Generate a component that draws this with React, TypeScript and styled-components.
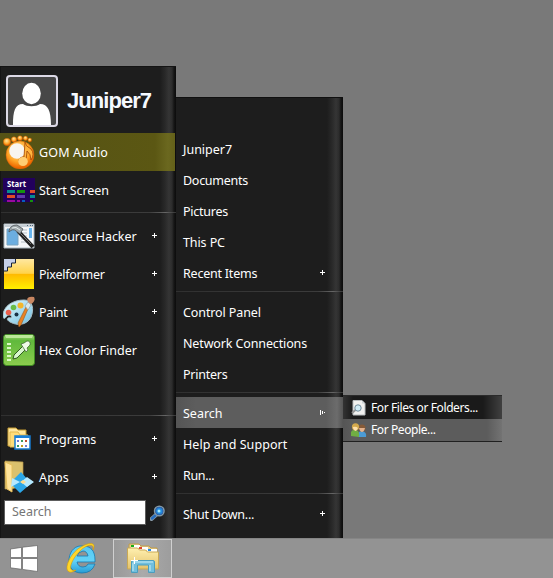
import React from 'react';
import styled, { createGlobalStyle } from 'styled-components';

const Global = createGlobalStyle`
  * { box-sizing: border-box; }
  body { margin: 0; font-family: "Noto Sans", "Open Sans", sans-serif; overflow: hidden; }
  svg { display: block; flex: none; }
`;

const Desktop = styled.div`
  width: 553px;
  height: 578px;
  display: flex;
  flex-direction: column;
  background: #797979;
  color: #fff;
`;

const Workspace = styled.main`
  height: 538px;
  display: flex;
  align-items: flex-end;
`;

const panelShade = `linear-gradient(to left, #0b0b0b 0, #151515 2px, #2c2c2c 4px, #353535 7px, #292929 11px, #1d1d1d 16px)`;

const LeftPanel = styled.section`
  width: 176px;
  height: 472px;
  background: ${panelShade};
  border-top: 1px solid #141414;
  border-left: 1px solid #141414;
`;

const RightPanel = styled.section`
  width: 167px;
  height: 441px;
  padding-top: 35px;
  background: ${panelShade};
  border-top: 1px solid #101010;
`;

const Profile = styled.header`
  height: 66px;
  display: flex;
  align-items: flex-start;
  padding: 8px 0 0 5px;
`;

const UserName = styled.h1`
  margin: 11px 0 0 9px;
  font: bold 22px/29px "Liberation Sans", Arial, sans-serif;
  letter-spacing: -0.95px;
  color: #f5f9ff;
`;

const AppRow = styled.div<{ $active?: boolean }>`
  height: 38px;
  margin-left: -1px;
  width: 175px;
  display: flex;
  align-items: center;
  padding-left: 3px;
  background: ${(p) => (p.$active ? 'linear-gradient(to right, #555215 0, #5b5713 155px, #6b681f 168px, #636019 100%)' : 'transparent')};
`;

const Label = styled.span<{ $spacing?: number }>`
  font-size: 12.5px;
  line-height: 18px;
  padding-top: 2px;
  letter-spacing: ${(p) => p.$spacing ?? 0}px;
  white-space: nowrap;
`;

const AppLabel = styled(Label)`
  width: 113px;
  margin-left: 4px;
`;

const Rule = styled.div`
  height: 8px;
  padding-top: 3px;
  &::before {
    content: '';
    display: block;
    height: 1px;
    background: linear-gradient(to right, #303030 0, #3c3c3c 85%, #666 94%, #333 100%);
  }
`;

const Spacer = styled.div`
  height: 43px;
`;

const SearchBar = styled.div`
  display: flex;
  align-items: center;
  gap: 4px;
  padding: 4px 0 0 3px;
`;

const SearchField = styled.input`
  width: 142px;
  height: 25px;
  padding: 0 7px 2px;
  border: 1px solid #5d5d5d;
  outline: 0;
  border-radius: 0;
  background: #fff;
  font: 12.5px "Noto Sans", sans-serif;
  &::placeholder { color: #757575; opacity: 1; }
`;

const PlaceRow = styled.div<{ $active?: boolean }>`
  height: 31px;
  display: flex;
  align-items: center;
  padding: 0 18px 0 7px;
  background: ${(p) => (p.$active ? 'linear-gradient(to right, #555 0, #5d5d5d 20px, #5d5d5d 150px, #6c6c6c 161px, #555 100%)' : 'transparent')};
`;

const PlaceLabel = styled(Label)`
  flex: 1;
  padding-top: 3px;
`;

const Flyout = styled.section`
  align-self: flex-start;
  width: 159px;
  height: 47px;
  margin-top: 395px;
  border-top: 1px solid #2b2b2b;
  border-bottom: 1px solid #202020;
`;

const FlyoutRow = styled.div<{ $active?: boolean }>`
  height: ${(p) => (p.$active ? 22 : 23)}px;
  display: flex;
  align-items: center;
  gap: 4px;
  padding: ${(p) => (p.$active ? 0 : 1)}px 0 0 8px;
  background: ${(p) =>
    p.$active
      ? 'linear-gradient(to right, #555, #5c5c5c 10px, #5c5c5c 144px, #737373 100%)'
      : 'linear-gradient(to right, #333, #1a1a1a 10px, #1a1a1a 140px, #404040 100%)'};
`;

const FlyoutLabel = styled.span`
  font-size: 12px;
  line-height: 18px;
  letter-spacing: -0.4px;
  white-space: nowrap;
`;

const Taskbar = styled.footer`
  height: 40px;
  display: flex;
  align-items: center;
  padding-left: 7px;
  background: #939393;
  border-top: 1px solid #858585;
`;

const TaskButton = styled.div<{ $open?: boolean; $gap?: number }>`
  width: ${(p) => (p.$open ? 59 : 34)}px;
  height: 39px;
  display: flex;
  align-items: center;
  justify-content: center;
  border: ${(p) => (p.$open ? '1px solid #d0d0d0' : '0')};
  background: ${(p) => (p.$open ? 'linear-gradient(to right, #999, #aaa 50%, #9d9d9d)' : 'transparent')};
  margin-right: ${(p) => p.$gap ?? 0}px;
`;

const Plus = () => (
  <svg width="5" height="6" viewBox="0 0 5 6" shapeRendering="crispEdges">
    <path d="M0 2h5v1H0zM2 0h1v5H2z" fill="#fff" />
  </svg>
);

const OpenMark = () => (
  <svg width="5" height="5" viewBox="0 0 5 5" shapeRendering="crispEdges">
    <path d="M0 0h1v5H0zM2 1h1v3H2zM4 2h1v1H4z" fill="#fff" />
  </svg>
);

const Avatar = () => (
  <svg width="52" height="52" viewBox="0 0 52 52">
    <rect x="1" y="1" width="50" height="50" rx="3" fill="#474747" stroke="#dcd9e6" strokeWidth="2" />
    <ellipse cx="25.5" cy="18.5" rx="9.3" ry="10.7" fill="#fff" />
    <path d="M7 50C7 36 9 29 17 29C21 32 30 32 34 29C42 29 45 36 45 50Z" fill="#fff" />
  </svg>
);

const GomIcon = () => (
  <svg width="32" height="34" viewBox="0 0 32 34">
    <defs>
      <radialGradient id="gom" cx=".45" cy=".35" r=".6"><stop offset="0" stopColor="#ffe49c" /><stop offset=".65" stopColor="#ffa526" /><stop offset="1" stopColor="#ee6800" /></radialGradient>
    </defs>
    <g fill="url(#gom)" stroke="#c85a08" strokeWidth=".4">
      <circle cx="4" cy="7" r="3.7" /><circle cx="11" cy="4.5" r="2.7" /><circle cx="17" cy="3.2" r="2.5" /><circle cx="22.5" cy="3.3" r="2.2" /><circle cx="26.8" cy="5" r="1.9" />
      <circle cx="17" cy="20" r="14" />
    </g>
    <circle cx="14" cy="16" r="7.8" fill="#f8f5ef" />
    <path d="M22 7Q22 11 28 14Q32 19 28 25Q28 19 24 16L23 26Q22 32 17 29Q14 24 19 22L21 22Z" fill="#ffb43e" stroke="#a14505" strokeWidth=".8" />
    <ellipse cx="20" cy="26.5" rx="4.8" ry="4.5" fill="#ffce73" />
  </svg>
);

const TileText = styled.text`
  font: bold 9px "Noto Sans", sans-serif;
  fill: #fff;
`;

const StartTile = () => (
  <svg width="32" height="24" viewBox="0 0 32 24">
    <path fill="#22005c" d="M0 0h32v24H0z" />
    <TileText x="4" y="8.5" textLength="19" lengthAdjust="spacingAndGlyphs">Start</TileText>
    <path d="M4 12h8v3H4zM27 17h5v3h-5z" fill="#078b91" /><path d="M14 12h8v3h-8zM27 22h3v2h-3z" fill="#15910f" />
    <path d="M27 12h5v3h-5zM4 17h8v3H4z" fill="#df4b28" /><path d="M14 17h8v3h-8z" fill="#6137ad" />
    <path d="M4 22h8v2H4zM14 22h3v2h-3z" fill="#9a08a0" /><path d="M19 22h3v2h-3z" fill="#075ebf" />
  </svg>
);

const HackerIcon = () => (
  <svg width="32" height="26" viewBox="0 0 32 26">
    <path d="M1 1h30v24H1z" fill="#f5f7f9" stroke="#aab6bd" /><path d="M2 2h28v2H2z" fill="#c6cfd5" />
    <path d="M24 2h1v1h-1zM27 2h1v1h-1zM29 2h1v1h-1z" fill="#506478" />
    <path d="M4 6h11v16H4z" fill="#6caee0" stroke="#79a3bf" /><path d="M26 5h3v10h-3z" fill="#68b5ef" />
    <path d="M18 7h6M18 10h6M18 13h6M18 16h6M18 19h6" stroke="#b6bfc6" />
    <path d="M15 8L30 24" stroke="#202020" strokeWidth="4" /><path d="M16 9L28 21" stroke="#777" strokeWidth="1" />
    <path d="M6 8Q7 2 14 2L20 6L17 11L13 8Q10 5 6 9Z" fill="#a0a8ab" stroke="#4b5357" strokeWidth=".8" /><path d="M9 5Q13 3 17 7" stroke="#e5eeee" fill="none" />
  </svg>
);

const PixelIcon = () => (
  <svg width="32" height="30" viewBox="0 0 32 30">
    <defs><linearGradient id="pixel" x2="0" y2="1"><stop stopColor="#ffe8a0" /><stop offset=".48" stopColor="#ffd34a" /><stop offset=".5" stopColor="#ffb900" /><stop offset="1" stopColor="#fff000" /></linearGradient></defs>
    <path fill="url(#pixel)" d="M1 0h30v30H1z" /><path d="M1 0h11v4H8v4H4v4H1z" fill="#c5cfe8" /><path d="M12.5 0v4h-4v4h-4v4H1" fill="none" stroke="#172238" />
  </svg>
);

const PaintIcon = () => (
  <svg width="32" height="32" viewBox="0 0 32 32">
    <defs><linearGradient id="paint" x2="1" y2="1"><stop stopColor="#e7fcff" /><stop offset="1" stopColor="#72bfe1" /></linearGradient></defs>
    <path d="M0 20C0 10 10 4 21 4C28 4 31 10 29 18C27 28 16 31 7 26C2 23 5 21 8 22C10 20 6 17 3 21C2 23 0 23 0 20Z" fill="url(#paint)" stroke="#a6bec6" />
    <circle cx="5.5" cy="16.5" r="2.8" fill="#eb604c" /><circle cx="10.5" cy="11.5" r="2.8" fill="#69bd48" /><circle cx="17.5" cy="9.5" r="3" fill="#f4b52b" /><circle cx="13.5" cy="18.5" r="2" fill="#173246" />
    <path d="M23 11L25 13L18 29L16 31L15 27Z" fill="#e98223" stroke="#8e5a25" strokeWidth=".6" /><path d="M22 10L25 6L28 9L25 14Z" fill="#dae7e9" stroke="#899da1" strokeWidth=".6" /><path d="M25 6Q22 0 31 1Q33 5 28 8Z" fill="#c78661" />
  </svg>
);

const ColorIcon = () => (
  <svg width="32" height="32" viewBox="0 0 32 32">
    <defs><linearGradient id="color" x2="0" y2="1"><stop stopColor="#a8dd7a" /><stop offset=".2" stopColor="#60b93c" /><stop offset="1" stopColor="#8ccc4e" /></linearGradient></defs>
    <rect x=".5" y=".5" width="31" height="31" rx="3" fill="url(#color)" stroke="#3f8b22" /><path d="M2 1h28l-1 3H3z" fill="#bce99a" />
    <path d="M4 9h4v2H4zM4 13h4v2H4zM4 17h4v2H4zM4 21h4v2H4zM4 25h4v2H4z" fill="#daf7c5" />
    <path d="M20 12L11 21L10 25L14 24L23 15Z" fill="#d9f6ce" stroke="#315c20" /><path d="M18 10L21 9L24 7Q28 7 27 11L24 14L25 16L23 18Z" fill="#effbe9" stroke="#36602b" strokeWidth=".7" />
  </svg>
);

const ProgramsIcon = () => (
  <svg width="32" height="30" viewBox="0 0 32 30">
    <path d="M5 4h8l2 2h8v16H5z" fill="#ffe79e" stroke="#c49a31" /><path d="M7 8h8l2 3h8v12H7z" fill="#ffdc79" stroke="#e2b94e" />
    <path d="M12 12h15v13H12z" fill="#fff" stroke="#1679ce" strokeWidth="1.5" /><path d="M12 12h15v2H12z" fill="#187fd9" />
    <path d="M14 16h2v2h-2zM22 21h2v2h-2z" fill="#717bd0" /><path d="M18 16h2v2h-2zM14 21h2v2h-2z" fill="#3a9a62" /><path d="M22 16h2v2h-2z" fill="#bd4c34" /><path d="M18 21h2v2h-2z" fill="#c39c20" />
  </svg>
);

const AppsIcon = () => (
  <svg width="32" height="34" viewBox="0 0 32 34">
    <path d="M2 1L20 2V26L8 29H2z" fill="#dbc16d" stroke="#b49548" strokeWidth=".7" /><path d="M2 2L9 5V32L4 29Z" fill="#ffe49a" stroke="#e8bf5b" />
    <path d="M9 21L18 12L25 20L30 22L24 27L17 33L9 25Z" fill="#2ca7e8" /><path d="M9 18L17 22L8 27ZM18 22L24 17L31 22L24 27Z" fill="#b6e9ff" /><path d="M17 22L20 20L23 22L20 24Z" fill="#ffdb8c" />
  </svg>
);

const Magnifier = () => (
  <svg width="16" height="16" viewBox="0 0 16 16">
    <path d="M1.5 14L7 9" stroke="#889baa" strokeWidth="4" strokeLinecap="round" /><path d="M2 13.5L7 9" stroke="#266dbf" strokeWidth="2.5" strokeLinecap="round" />
    <circle cx="9.3" cy="6" r="4.7" fill="#10324f" stroke="#8299a8" strokeWidth="1.6" /><circle cx="9.3" cy="6" r="3.6" fill="#218ddd" stroke="#3069be" /><circle cx="9" cy="6" r="1.5" fill="#a7eaff" />
  </svg>
);

const FileIcon = () => (
  <svg width="16" height="16" viewBox="0 0 16 16">
    <path d="M2 .5h9l3 3V15H2z" fill="#f1f1ef" stroke="#b9bdbf" /><path d="M11 .5v3h3" fill="#cdd3d6" /><path d="M1 13L5 9.5" stroke="#939393" strokeWidth="2" /><circle cx="7" cy="8" r="3.2" fill="#d0ebf5" stroke="#718c9b" />
  </svg>
);

const PeopleIcon = () => (
  <svg width="16" height="16" viewBox="0 0 16 16">
    <path d="M7 15Q6 9 11 9Q16 10 15 15Z" fill="#4b9bd5" /><circle cx="11" cy="6" r="3.5" fill="#855a38" /><path d="M8 6h6q-1 4-3 4t-3-4" fill="#e3b28d" />
    <path d="M0 14Q-1 7 4 8Q9 8 8 15Z" fill="#70ad43" /><circle cx="4.5" cy="4.8" r="3.6" fill="#d4a94c" /><path d="M2 5Q5 4 7 6L5 9Q2 8 2 5" fill="#ffe1ac" />
  </svg>
);

const WindowsLogo = () => (
  <svg width="28" height="27" viewBox="0 0 28 27">
    <path d="M.5 4L11.5 2.4V12.5H.5zM12.5 2.2L27.5.5V12.5H12.5zM.5 13.5h11v10.8L.5 22.8zM12.5 13.5h15v13l-15-2.1z" fill="#fff" stroke="#646464" strokeWidth=".7" />
  </svg>
);

const ExplorerLogo = () => (
  <svg width="31" height="33" viewBox="0 0 31 33">
    <defs><linearGradient id="explorer" x2="0" y2="1"><stop stopColor="#58c9f3" /><stop offset=".55" stopColor="#62d2f7" /><stop offset="1" stopColor="#279cd5" /></linearGradient></defs>
    <path d="M29 18V20H11Q12 25 17 25Q21 25 22 22H29Q26 31 16 31C7 31 2 25 3 17C4 8 10 3 17 4C25 4 29 9 29 18ZM11 14H22Q21 9 17 9Q12 10 11 14Z" fill="url(#explorer)" stroke="#1679b0" strokeWidth=".8" fillRule="evenodd" />
    <path d="M27 8C31 0 23 0 15 5C7 9 0 21 1 27C2 31 6 31 10 28C1 31 4 19 14 9C21 2 29 1 27 8Z" fill="#ffd62a" stroke="#d79d00" strokeWidth=".6" />
  </svg>
);

const FilesLogo = () => (
  <svg width="34" height="31" viewBox="0 0 34 31">
    <defs><linearGradient id="files" x2="0" y2="1"><stop stopColor="#fff0b0" /><stop offset="1" stopColor="#e4c36c" /></linearGradient></defs>
    <path d="M3 1h10l2 2h8l2 2h6v20H3z" fill="#ead08a" stroke="#bd9b4c" />
    <path d="M5 2h9v3H5zM13 4h9v3h-9zM21 6h10v4H21z" fill="#fff" />
    <path d="M5 2h3v2H5z" fill="#19ae18" /><path d="M13 4h3v2h-3z" fill="#dc4429" /><path d="M22 6h3v2h-3z" fill="#238ae2" />
    <path d="M1.5 5h10l2 2h6l2 2h11v17h-31z" fill="url(#files)" stroke="#c9a955" />
    <path d="M5.5 29.5V19Q5.500 17.500 7 17.500H27Q28.500 17.500 28.500 19V29.500H22.500V22H11.500V29.500Z" fill="#71bfdd" stroke="#4b9dbe" />
    <path d="M7 19H27M7 20V28M24 22V28" stroke="#c8eef8" /><path d="M8.500 14v7M5 17.500h7" stroke="#fff" />
  </svg>
);

type AppItemProps = { icon: React.ReactNode; text: string; more?: boolean; active?: boolean; spacing?: number };
const AppItem = ({ icon, text, more, active, spacing }: AppItemProps) => (
  <AppRow $active={active}>{icon}<AppLabel $spacing={spacing}>{text}</AppLabel>{more && <Plus />}</AppRow>
);

type PlaceItemProps = { text: string; more?: boolean; active?: boolean; spacing?: number };
const PlaceItem = ({ text, more, active, spacing }: PlaceItemProps) => (
  <PlaceRow $active={active}><PlaceLabel $spacing={spacing}>{text}</PlaceLabel>{active ? <OpenMark /> : more && <Plus />}</PlaceRow>
);

export default function App() {
  return (
    <>
      <Global />
      <Desktop>
        <Workspace>
          <LeftPanel>
            <Profile><Avatar /><UserName>Juniper7</UserName></Profile>
            <AppItem icon={<GomIcon />} text="GOM Audio" active spacing={0.15} />
            <AppItem icon={<StartTile />} text="Start Screen" spacing={-0.08} />
            <Rule />
            <AppItem icon={<HackerIcon />} text="Resource Hacker" more spacing={-0.06} />
            <AppItem icon={<PixelIcon />} text="Pixelformer" more spacing={-0.25} />
            <AppItem icon={<PaintIcon />} text="Paint" more spacing={-0.35} />
            <AppItem icon={<ColorIcon />} text="Hex Color Finder" />
            <Spacer />
            <Rule />
            <AppItem icon={<ProgramsIcon />} text="Programs" more />
            <AppItem icon={<AppsIcon />} text="Apps" more spacing={0.15} />
            <SearchBar><SearchField placeholder="Search" /><Magnifier /></SearchBar>
          </LeftPanel>
          <RightPanel>
            <PlaceItem text="Juniper7" />
            <PlaceItem text="Documents" spacing={-0.28} />
            <PlaceItem text="Pictures" spacing={-0.25} />
            <PlaceItem text="This PC" spacing={-0.1} />
            <PlaceItem text="Recent Items" more spacing={-0.22} />
            <Rule />
            <PlaceItem text="Control Panel" spacing={-0.1} />
            <PlaceItem text="Network Connections" spacing={-0.13} />
            <PlaceItem text="Printers" spacing={-0.25} />
            <Rule />
            <PlaceItem text="Search" active />
            <PlaceItem text="Help and Support" spacing={0.06} />
            <PlaceItem text="Run..." spacing={-0.35} />
            <Rule />
            <PlaceItem text="Shut Down..." more spacing={-0.25} />
          </RightPanel>
          <Flyout>
            <FlyoutRow><FileIcon /><FlyoutLabel>For Files or Folders...</FlyoutLabel></FlyoutRow>
            <FlyoutRow $active><PeopleIcon /><FlyoutLabel>For People...</FlyoutLabel></FlyoutRow>
          </Flyout>
        </Workspace>
        <Taskbar>
          <TaskButton $gap={23}><WindowsLogo /></TaskButton>
          <TaskButton $gap={15}><ExplorerLogo /></TaskButton>
          <TaskButton $open><FilesLogo /></TaskButton>
        </Taskbar>
      </Desktop>
    </>
  );
}
